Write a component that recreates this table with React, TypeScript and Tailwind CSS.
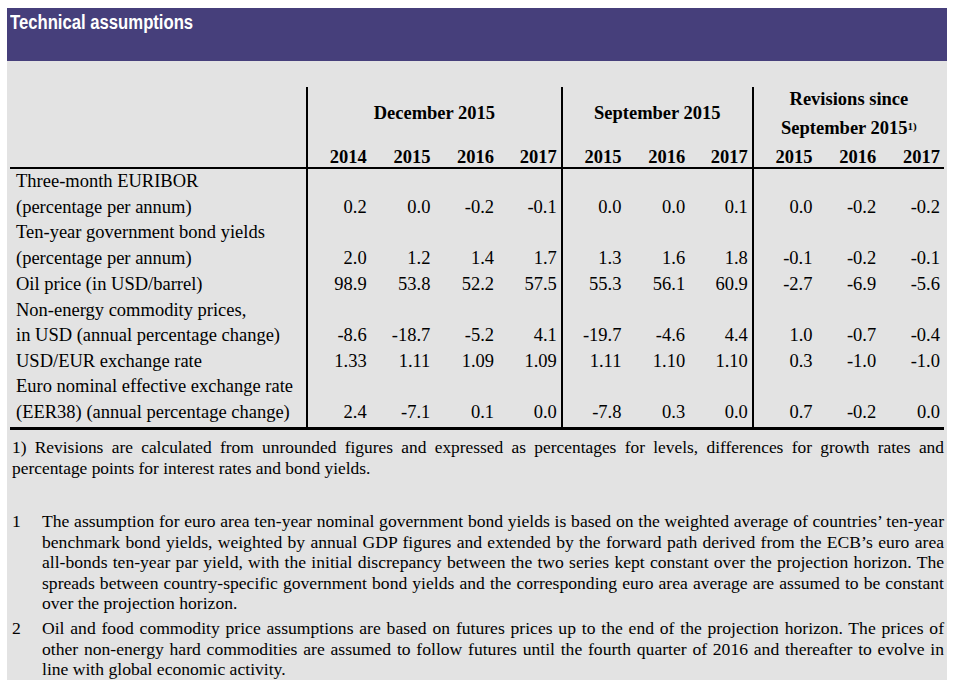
import React from 'react';

type Row = {
  label: string[];
  values: string[];
  cellPad?: string;
};

const rows: Row[] = [
  { label: ['Three-month EURIBOR', '(percentage per annum)'], values: ['0.2', '0.0', '-0.2', '-0.1', '0.0', '0.0', '0.1', '0.0', '-0.2', '-0.2'] },
  { label: ['Ten-year government bond yields', '(percentage per annum)'], values: ['2.0', '1.2', '1.4', '1.7', '1.3', '1.6', '1.8', '-0.1', '-0.2', '-0.1'] },
  { label: ['Oil price (in USD/barrel)'], values: ['98.9', '53.8', '52.2', '57.5', '55.3', '56.1', '60.9', '-2.7', '-6.9', '-5.6'], cellPad: 'pt-px' },
  { label: ['Non-energy commodity prices,', 'in USD (annual percentage change)'], values: ['-8.6', '-18.7', '-5.2', '4.1', '-19.7', '-4.6', '4.4', '1.0', '-0.7', '-0.4'] },
  { label: ['USD/EUR exchange rate'], values: ['1.33', '1.11', '1.09', '1.09', '1.11', '1.10', '1.10', '0.3', '-1.0', '-1.0'] },
  { label: ['Euro nominal effective exchange rate', '(EER38) (annual percentage change)'], values: ['2.4', '-7.1', '0.1', '0.0', '-7.8', '0.3', '0.0', '0.7', '-0.2', '0.0'], cellPad: 'pb-[2px]' },
];

const years = ['2014', '2015', '2016', '2017', '2015', '2016', '2017', '2015', '2016', '2017'];

// columns that start a new block get the vertical rule
const ruleBefore = (i: number) => i === 0 || i === 4 || i === 7;

export default function App() {
  return (
    <div className="min-h-screen bg-white pt-2 pl-[7px] text-black font-['Liberation_Serif',serif]">
      <div className="w-[940px]">
        <div className="h-[53px] bg-[#463f7b] pl-[3px] pt-[2px]">
          <h1 className="origin-left scale-x-[0.855] font-['Liberation_Sans',sans-serif] text-[19.5px] font-bold leading-[24px] text-white whitespace-nowrap">
            Technical assumptions
          </h1>
        </div>

        <div className="bg-[#e3e3e3] pt-[26px]">
          <table className="ml-[3px] w-[934px] table-fixed border-collapse text-[18.5px] leading-[25.5px]">
            <colgroup>
              <col className="w-[297px]" />
            </colgroup>
            <thead>
              <tr className="h-[53px] font-bold">
                <th />
                <th colSpan={4} className="border-l-2 border-black text-center align-middle">December 2015</th>
                <th colSpan={3} className="border-l-2 border-black text-center align-middle">September 2015</th>
                <th colSpan={3} className="border-l-2 border-black p-0 text-center align-middle">
                  <div className="flex h-[53px] flex-col justify-center leading-[29px]">
                    <div>Revisions since</div>
                    <div>
                      September 2015<sup className="relative -top-[4px] text-[11px] font-bold">1)</sup>
                    </div>
                  </div>
                </th>
              </tr>
              <tr className="h-[28px] border-b-2 border-black font-bold">
                <th />
                {years.map((y, i) => (
                  <th key={i} className={`text-right pr-1 align-bottom leading-[20px] ${ruleBefore(i) ? 'border-l-2 border-black' : ''}`}>
                    {y}
                  </th>
                ))}
              </tr>
            </thead>
            <tbody>
              {rows.map((r, ri) => (
                <tr key={ri} className={ri === rows.length - 1 ? 'border-b-[3px] border-black' : ''}>
                  <td className={`pl-[6px] align-bottom whitespace-nowrap ${r.cellPad ?? ''}`}>
                    {r.label.map((l, li) => (
                      <div key={li}>{l}</div>
                    ))}
                  </td>
                  {r.values.map((v, i) => (
                    <td key={i} className={`text-right pr-1 align-bottom ${r.cellPad ?? ''} ${ruleBefore(i) ? 'border-l-2 border-black' : ''}`}>
                      {v}
                    </td>
                  ))}
                </tr>
              ))}
            </tbody>
          </table>

          <p className="ml-[5px] mt-[7px] w-[932px] text-justify text-[17.4px] leading-[21px]">
            1) Revisions are calculated from unrounded figures and expressed as percentages for levels, differences for growth rates and percentage points for interest rates and bond yields.
          </p>

          <div className="ml-[5px] mt-[32px] w-[932px] text-[17.6px] leading-[20.6px]">
            <div className="flex">
              <span className="w-[30px] shrink-0">1</span>
              <p className="text-justify">
                The assumption for euro area ten-year nominal government bond yields is based on the weighted average of countries’ ten-year benchmark bond yields, weighted by annual GDP figures and extended by the forward path derived from the ECB’s euro area <span className="whitespace-nowrap">all-bonds</span> ten-year par yield, with the initial discrepancy between the two series kept constant over the projection horizon. The spreads between country-specific government bond yields and the corresponding euro area average are assumed to be constant over the projection horizon.
              </p>
            </div>
            <div className="mt-1 flex">
              <span className="w-[30px] shrink-0">2</span>
              <p className="text-justify">
                Oil and food commodity price assumptions are based on futures prices up to the end of the projection horizon. The prices of other <span className="whitespace-nowrap">non-energy</span> hard commodities are assumed to follow futures until the fourth quarter of 2016 and thereafter to evolve in line with global economic activity.
              </p>
            </div>
          </div>
        </div>
      </div>
    </div>
  );
}
